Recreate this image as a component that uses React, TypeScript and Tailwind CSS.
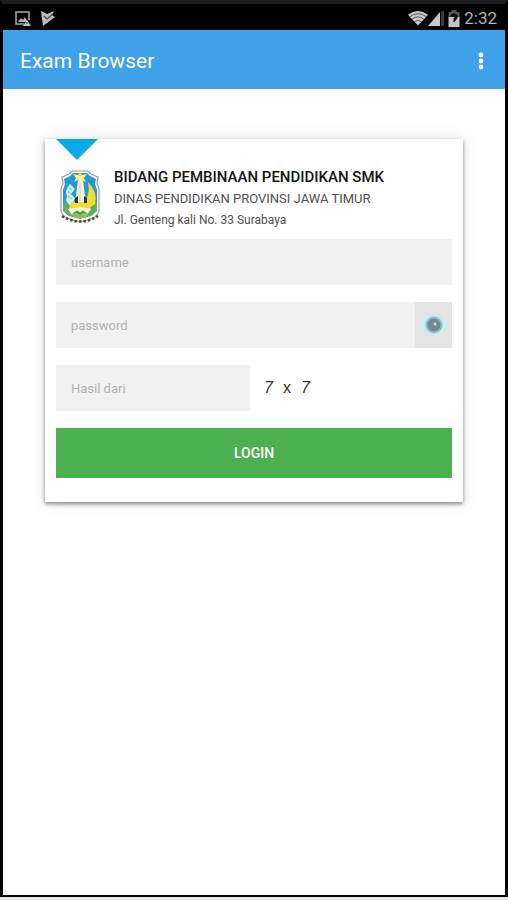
import { useState } from "react";

function StatusBar() {
  return (
    <div className="flex h-[26px] items-center justify-between bg-black pt-0.5 pr-2 pl-3 text-[#b4b4b4]">
      <div className="flex items-center gap-2.5">
        <svg width="16" height="15" viewBox="0 0 16 15" fill="none">
          <path d="M9 13H1V1h13v8" stroke="#a8a8a8" strokeWidth="1.5" />
          <path d="M3 11l3-4 2 2 2-3 2 4-2 1z" fill="#b4b4b4" />
          <path d="M8 15l4-6 4 6z" fill="#c4c4c4" />
          <path d="M12 11v2" stroke="#222" strokeWidth="1" />
        </svg>
        <svg width="14" height="15" viewBox="0 0 14 15">
          <path d="M0 0l6 3 7-3-2 4 3 2L2 15z" fill="#bcbcbc" />
          <path d="M3 5l3 3 6-5" stroke="#444" strokeWidth="1.2" fill="none" />
        </svg>
      </div>
      <div className="flex items-center">
        <svg width="20" height="16" viewBox="0 0 21 16" fill="none">
          <path d="M0 4.5Q10.500-3 21 4.500L10.500 16z" fill="#c8c8c8" />
          <path
            d="M2 6.500q8.500-6 17 0M4.500 9q6-4.500 12 0M7 11.800q3.500-2.500 7 0"
            stroke="#555"
            strokeWidth="1"
          />
        </svg>
        <svg width="16" height="16" viewBox="0 0 16 16">
          <path d="M13 2l3-2v16h-3z" fill="#3c3c3c" />
          <path d="M12 2v14H0z" fill="#c8c8c8" />
        </svg>
        <svg className="ml-1" width="12" height="17" viewBox="0 0 11 17">
          <path d="M3 0h5v2h3v6H0V2h3z" fill="#555" />
          <path d="M0 7h11v10H0z" fill="#c4c4c4" />
          <path d="M2 5l3.500-2L9 5v3L6 12H5V9l1-2H2z" fill="#111" />
        </svg>
        <span className="ml-1 text-[17px] leading-5">2:32</span>
      </div>
    </div>
  );
}

function Crest() {
  return (
    <svg
      className="mt-1 shrink-0"
      width="40"
      height="54"
      viewBox="0 0 40 54"
      role="img"
      aria-label="Jawa Timur"
    >
      <path
        d="M12 1h16l3 3 7 3-1 6 2 6v23l-4 5-7 3-8 2-8-2-7-3-4-5V19l2-6-1-6 7-3z"
        fill="#fff"
        stroke="#9a9a9a"
        strokeWidth="1.2"
      />
      <path
        d="M13 3h14l3 3 6 3-1 5 2 6v20l-5 5-12 3-12-3-5-5V20l2-6-1-5 6-3z"
        fill="#2398d5"
      />
      <path d="M3 33l7-1 4 5 6-2 6 3 5-7 6 1v9l-6 5-11 3-11-3-6-5z" fill="#5aaf62" />
      <path d="M28 12q10 10 7 22l-9 6-4-6q9-8 6-22z" fill="#f0de2a" />
      <path d="M10 14q-6 7-3 12l-1 5 5 6 4-9-4-4 4-5z" fill="#d9f2fa" />
      <path d="M9 18l3 1-4 3 4 2-4 3 4 2" stroke="#7cc0df" strokeWidth="1" fill="none" />
      <path d="M18 10h5l3 23H15z" fill="#f7f3e4" />
      <path d="M20 13v18" stroke="#cfc6a0" strokeWidth="1" />
      <path d="M20 2l2 3 5-1-3 4 2 4-4-2-2 4-2-4-4 2 2-4-3-4 5 1z" fill="#fff08a" />
      <path d="M11 32h17l3 7H9z" fill="#f8d92b" />
      <path d="M15 28l3-2v7h-3zM24 26l3 2v5h-3z" fill="#25384a" />
      <path d="M8 39l12-2 11 2-4 6H12z" fill="#f2f8e5" />
      <path d="M12 44l5-4 3 2 3-2 5 4-3 4H15z" fill="#8fc44a" />
      <path d="M14 43l3-1 3 2 3-2 3 1" stroke="#3f8a4d" strokeWidth="1.2" fill="none" />
      <path
        d="M2 46q18 11 36 0"
        stroke="#444"
        strokeWidth="2.5"
        strokeDasharray="2.500 2"
        fill="none"
      />
    </svg>
  );
}

function EyeIcon() {
  return (
    <svg className="shrink-0" width="30" height="24" viewBox="0 0 30 24">
      <path d="M0 12Q15-10 30 12 15 34 0 12z" fill="#c8eeee" />
      <circle cx="15" cy="12" r="8.500" fill="#86c4c3" />
      <circle cx="15" cy="12" r="6.500" fill="#75898f" />
      <circle cx="16" cy="11" r="1.500" fill="#d7e2e3" />
    </svg>
  );
}

const field =
  "h-[46px] min-w-0 bg-[#f1f1f1] px-[15px] text-[13px] text-gray-700 outline-none placeholder:text-[#b3b3b3]";

export default function App() {
  const [visible, setVisible] = useState(false);

  return (
    <div className="flex min-h-screen flex-col bg-[#e3e3e3] pb-[3px] font-[Roboto,sans-serif]">
      <div className="flex grow flex-col border-x-3 border-t-4 border-b-2 border-black border-t-[#1d1c21] bg-white">
        <StatusBar />
        <header className="flex h-[59px] items-center justify-between bg-[#3fa2e9] pt-0.5 pr-[14px] pl-[17px] text-white">
          <h1 className="text-[21px] leading-6">Exam Browser</h1>
          <button type="button" aria-label="Menu" className="flex w-5 justify-center">
            <svg width="6" height="18" viewBox="0 0 6 18" fill="#fff">
              <circle cx="3" cy="3" r="2.400" />
              <circle cx="3" cy="9" r="2.400" />
              <circle cx="3" cy="15" r="2.400" />
            </svg>
          </button>
        </header>

        <main className="px-[42px] pt-[50px]">
          <form
            className="bg-white px-[11px] pb-6 shadow-[0_2px_4px_rgba(0,0,0,0.45),0_0_16px_rgba(0,0,0,0.1)]"
            onSubmit={(e) => e.preventDefault()}
          >
            <svg width="42" height="21" viewBox="0 0 42 21">
              <path d="M0 0h42L21 21z" fill="#09aae5" />
            </svg>
            <div className="flex items-start gap-[14px] pt-1.5 pb-2 pl-1">
              <Crest />
              <div className="text-[#505050]">
                <h2 className="text-[15px] leading-[22px] font-medium text-[#151515]">
                  BIDANG PEMBINAAN PENDIDIKAN SMK
                </h2>
                <p className="text-[13px] leading-[21px]">DINAS PENDIDIKAN PROVINSI JAWA TIMUR</p>
                <p className="text-[12px] leading-[22px]">Jl. Genteng kali No. 33 Surabaya</p>
              </div>
            </div>

            <div className="flex flex-col gap-[17px]">
              <input className={field} type="text" placeholder="username" aria-label="username" />
              <div className="flex">
                <input
                  className={`${field} grow`}
                  type={visible ? "text" : "password"}
                  placeholder="password"
                  aria-label="password"
                />
                <button
                  type="button"
                  aria-label="Show password"
                  className="flex w-[37px] items-center justify-center bg-[#e4e4e4]"
                  onClick={() => setVisible(!visible)}
                >
                  <EyeIcon />
                </button>
              </div>
              <div className="flex items-center gap-[14px]">
                <input
                  id="answer"
                  className={`${field} w-[49%]`}
                  type="text"
                  placeholder="Hasil dari"
                  aria-label="Hasil dari"
                />
                <label
                  htmlFor="answer"
                  className="flex gap-2.5 font-[Liberation_Sans,sans-serif] text-[16px] leading-5 text-[#333]"
                >
                  <i>7</i>
                  <span>x</span>
                  <i>7</i>
                </label>
              </div>
              <button
                type="submit"
                className="h-[50px] bg-[#4caf50] text-[14px] font-medium text-white"
              >
                LOGIN
              </button>
            </div>
          </form>
        </main>
      </div>
    </div>
  );
}
